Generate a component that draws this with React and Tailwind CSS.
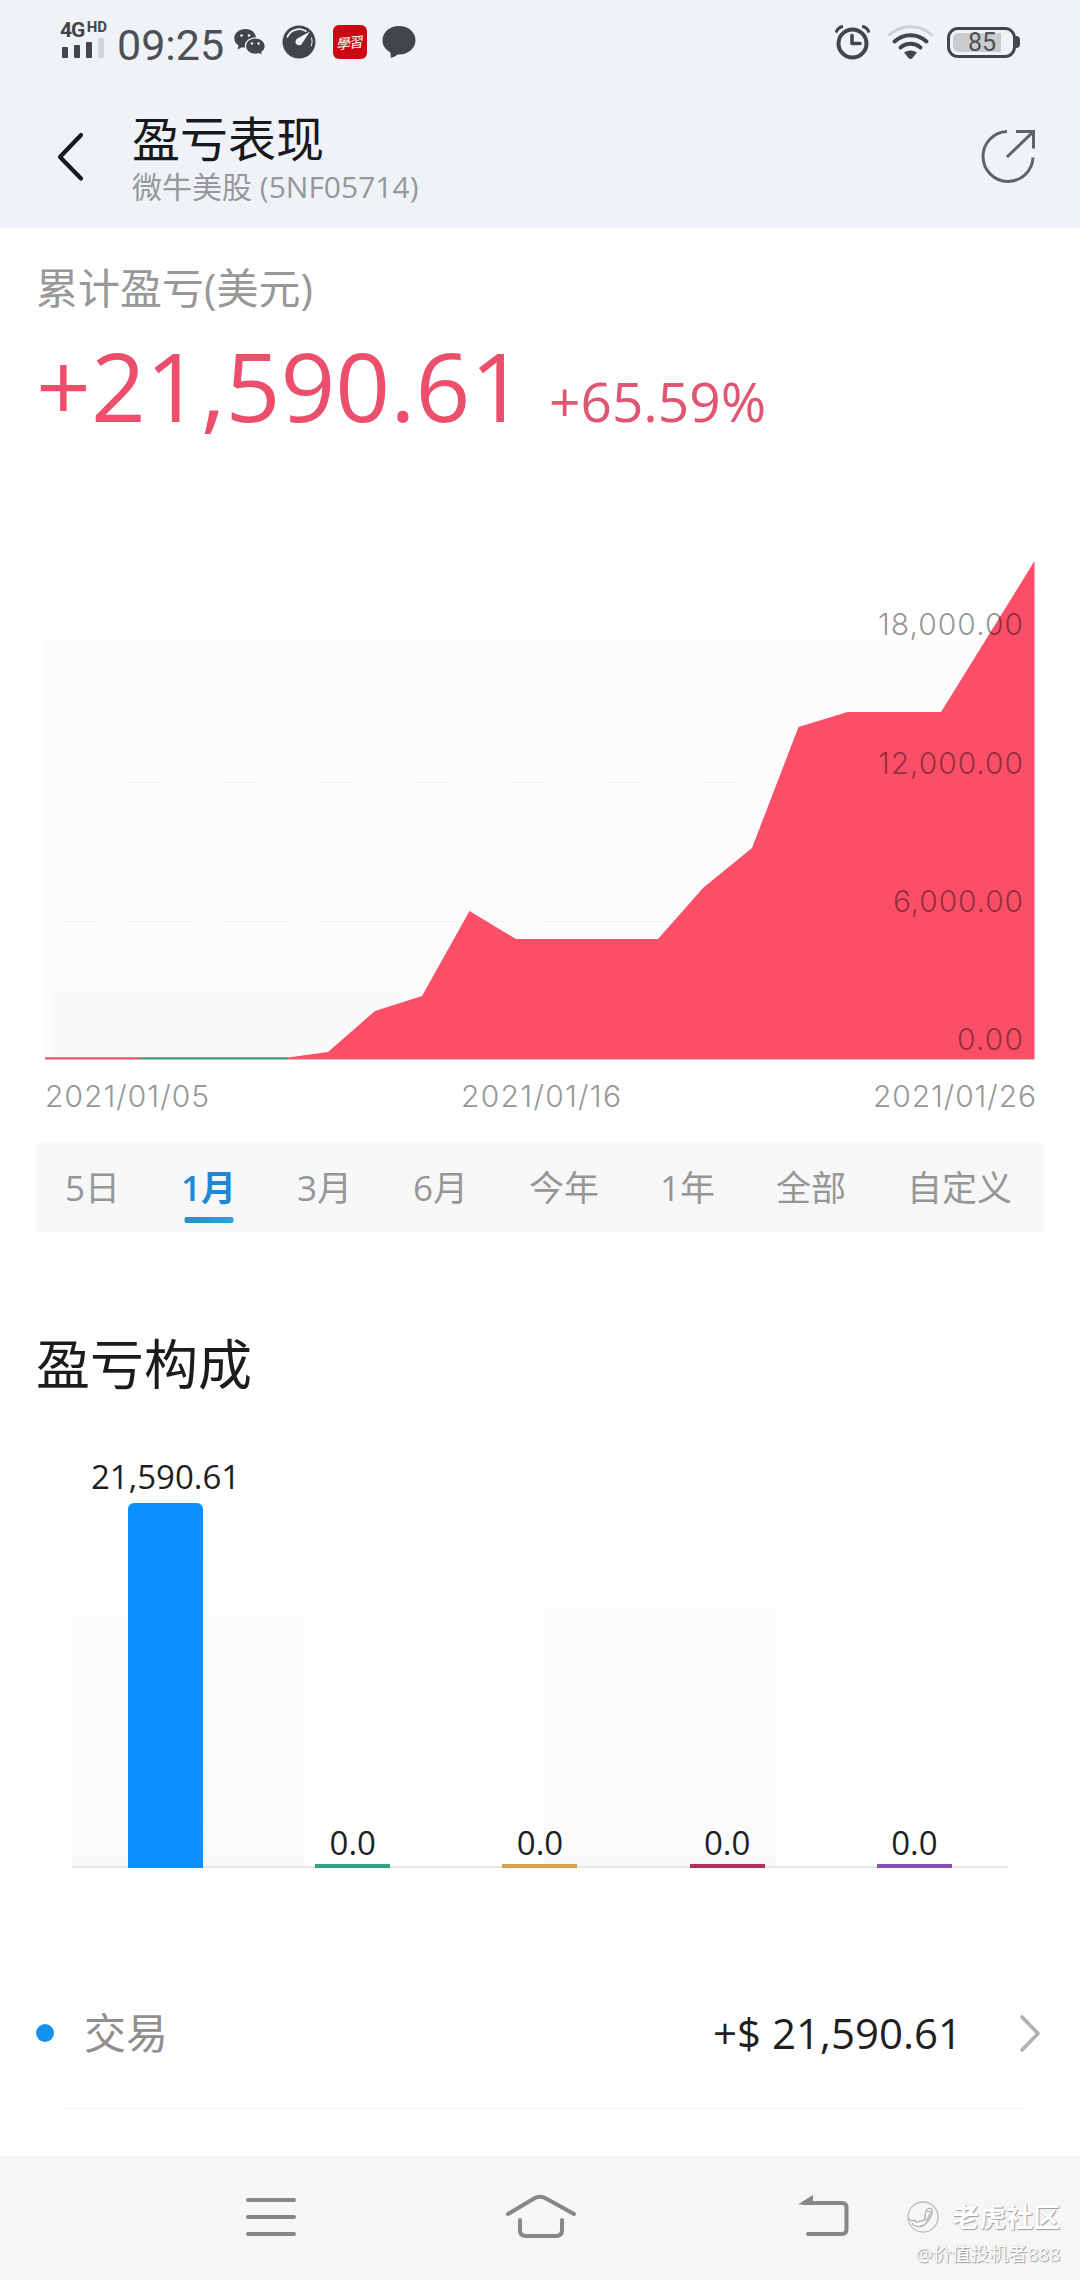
import React from "react";

const INK = "#42454a";

function Signal() {
  return (
    <div className="flex w-[47px] flex-col">
      <div className="flex h-4 items-start justify-between font-['Roboto'] font-bold text-[#42454a]">
        <span className="text-[21px] leading-4 tracking-[-1px]">4G</span>
        <span className="text-[15px] leading-[10px]">HD</span>
      </div>
      <div className="flex h-5 items-end gap-[6px] pl-[2px]">
        <i className="h-[11px] w-[6px] rounded-[1px] bg-[#42454a]" />
        <i className="h-[13px] w-[6px] rounded-[1px] bg-[#42454a]" />
        <i className="h-4 w-[6px] rounded-[1px] bg-[#42454a]" />
        <i className="h-5 w-[6px] rounded-[1px] bg-[#d3d5d8]" />
      </div>
    </div>
  );
}

function Chats() {
  return (
    <svg className="ml-2 h-[27px] w-8" viewBox="0 0 32 27">
      <path
        fill={INK}
        d="M11.5 0C5 0 .3 4 .3 9.300c0 3 1.600 5.600 4.200 7.300l-.9 4 4.200-2.400c1.200.3 2.200.4 3.700.4C17.500 18.600 22 14.700 22 9.300S17.500 0 11.500 0Z"
      />
      <path
        fill={INK}
        stroke="#eff3f8"
        strokeWidth="1.300"
        d="M21.300 8.800c-5.600 0-9.900 3.700-9.900 8.300s4.300 8.200 9.900 8.200c1.300 0 2.500-.2 3.600-.5l3.700 2-.8-3.400c2.100-1.500 3.500-3.700 3.500-6.300 0-4.600-4.400-8.300-10-8.300Z"
      />
      <g fill="#eff3f8">
        <circle cx="7.500" cy="6.500" r="1.300" />
        <circle cx="15" cy="6.500" r="1.300" />
        <circle cx="18" cy="14.500" r="1.200" />
        <circle cx="24.600" cy="14.500" r="1.200" />
      </g>
    </svg>
  );
}

function Gauge() {
  return (
    <svg className="ml-4 size-[34px]" viewBox="0 0 34 34">
      <circle cx="17" cy="17" r="16.500" fill={INK} />
      <path d="M5 12.500A13 13 0 0 1 24.500 6.500" fill="none" stroke="#eff3f8" strokeWidth="1.800" />
      <path d="M29.500 12.500a13 13 0 0 1-.2 8.500" fill="none" stroke="#eff3f8" strokeWidth="1" />
      <path d="M28 6.500 20.500 17.800a3.600 3.600 0 1 1-5.200-4.200Z" fill="#eff3f8" />
    </svg>
  );
}

function StatusBar() {
  return (
    <div className="flex h-[84px] items-center pl-[60px] pr-[60px] font-normal">
      <div className="-mt-[5px]">
        <Signal />
      </div>
      <span className="ml-[10px] mt-[5px] w-[109px] whitespace-nowrap font-['Roboto'] text-[43px] leading-[42px] text-[#4d5054]">
        09:25
      </span>
      <Chats />
      <Gauge />
      <div className="ml-[17px] flex size-[34px] items-center justify-center rounded-[6px] bg-[#cb0711]">
        <span className="-rotate-6 -skew-x-12 font-['Noto_Sans_CJK_SC'] text-[14px] leading-[34px] tracking-[-1px] text-white">
          學習
        </span>
      </div>
      <svg className="ml-[15px] h-8 w-[34px]" viewBox="0 0 34 32">
        <path
          fill={INK}
          d="M17 0C7.700 0 .5 6.200.5 14.300c0 5.200 3 9.500 7.800 12L9 32c2.500-.8 5-2 6.500-3.500h1.500c9.300 0 16.500-6 16.500-14.200S26.300 0 17 0Z"
        />
      </svg>

      <div className="ml-auto flex items-center">
        <svg className="h-[35px] w-[35px]" viewBox="0 0 35 35" fill="none" stroke={INK}>
          <circle cx="17.500" cy="18.500" r="14" strokeWidth="4" />
          <path d="M17 10.500v8h8" strokeWidth="3.600" strokeLinejoin="round" strokeLinecap="round" />
          <path d="M1 7.500C2.200 4 4.800 1.800 8 1.500M34 7.500C32.800 4 30.200 1.800 27 1.500" strokeWidth="3" />
        </svg>
        <svg className="ml-[17px] h-[35px] w-[47px]" viewBox="0 0 47 35" fill="none" strokeLinecap="round">
          <path d="M2.500 10C14-1 33-1 44.500 10" stroke="#cdd0d4" strokeWidth="3" />
          <path d="M7.500 16.500C16.500 8 30.500 8 39.500 16.500" stroke={INK} strokeWidth="4" />
          <path d="M13.500 22.500C19.500 17.500 27.500 17.500 33.500 22.500" stroke={INK} strokeWidth="4" />
          <path d="M17 27.500q6.500-4 13 0l-4.500 5.500q-2 1.800-4 0Z" fill={INK} />
        </svg>
        <div className="ml-[13px] flex h-[31px] w-[69px] items-center rounded-[11px] border-[3px] border-[#42454a] p-[3px]">
          <div className="flex h-full w-[48px] items-center justify-end rounded-l-[6px] bg-[#c9cbcd] pr-[5px]">
            <span className="mt-[2px] font-['Roboto'] text-[25px] leading-5 text-[#4d5054]">85</span>
          </div>
        </div>
        <i className="h-3 w-[4px] rounded-r-full bg-[#42454a]" />
      </div>
    </div>
  );
}

function Header() {
  return (
    <div className="flex h-[144px] items-start pl-[56px] pr-[44px]">
      <svg className="mt-[47px] h-[52px] w-[30px]" viewBox="0 0 30 52">
        <path d="M25 4 4 26l21 21.500" fill="none" stroke="#17191c" strokeWidth="4.200" strokeLinecap="round" strokeLinejoin="round" />
      </svg>
      <div className="ml-[46px] mt-[29px] flex flex-col">
        <h1 className="text-[48px] leading-[52px] text-[#17191c]">盈亏表现</h1>
        <p className="mt-[2px] text-[30px] leading-10 text-[#96989b]">微牛美股 (5NF05714)</p>
      </div>
      <svg className="ml-auto mt-[44px] h-[56px] w-[56px]" viewBox="980 128 56 56" fill="none" stroke="#606367" strokeWidth="3">
        <path d="M1007 131.500a25 25 0 1 0 26 26" />
        <path d="M1007 157l26-25M1016 131.500h17.500v17" />
      </svg>
    </div>
  );
}

const AREA =
  "M45 1057.500H288L328 1052 375 1011 422 996 469.500 911 516 939H658L703.500 887.500 752 848 798.500 727 847.500 712H941L1034.500 561V1059H45Z";

const DASHES = [
  [128, 160, 782], [224, 256, 782], [320, 352, 782], [416, 448, 782], [512, 544, 782], [608, 640, 782], [704, 736, 782],
  [64, 96, 921], [128, 192, 921], [224, 288, 921], [320, 458, 921], [482, 508, 921], [540, 668, 921],
];

const Y_LABELS = [
  ["18,000.00", 878, 145, 635],
  ["12,000.00", 878, 145, 774],
  ["6,000.00", 893, 130, 912],
  ["0.00", 957, 66, 1050],
];

const DATES = [
  ["2021/01/05", 45, 164],
  ["2021/01/16", 461, 160],
  ["2021/01/26", 873, 163],
];

function AreaChart() {
  return (
    <svg className="mt-[94px] block h-[580px] w-[1080px]" viewBox="0 540 1080 580">
      <path d="M45 640H985L941 712V1058H45Z" fill="#fcfcfc" />
      <rect x="51" y="991" width="350" height="67" fill="#fafafa" />
      {DASHES.map(([a, b, y]) => (
        <path key={a + "-" + y} d={`M${a} ${y + 0.5}H${b}`} stroke="#f1f1f1" strokeWidth="1" />
      ))}
      <path d={AREA} fill="#fb4f67" />
      <path d="M45 1058.500H140" stroke="#e5536c" strokeWidth="2" />
      <path d="M140 1058.500H288" stroke="#2f9f80" strokeWidth="2" />
      <path d="M288 1059H1034.500" stroke="#d9667c" strokeWidth="1" />
      <g fontFamily="Inter, sans-serif" fontSize="30" fontWeight="300">
        {Y_LABELS.map(([t, x, w, y]) => (
          <text key={t} x={x} y={y} textLength={w} fill="#000" fillOpacity="0.430">
            {t}
          </text>
        ))}
        {DATES.map(([t, x, w]) => (
          <text key={t} x={x} y="1107" textLength={w} fill="#969899">
            {t}
          </text>
        ))}
      </g>
    </svg>
  );
}

const TABS = ["5日", "1月", "3月", "6月", "今年", "1年", "全部", "自定义"];

function RangeTabs() {
  return (
    <div className="mx-[36px] mt-[23px] flex h-[89px] items-center gap-[61px] bg-[#f7f7f7] pl-[29px] text-[35px] leading-[40px] text-[#969696]">
      {TABS.map((t) =>
        t === "1月" ? (
          <div key={t} className="relative font-semibold text-[#2287d3]">
            {t}
            <i className="absolute -bottom-[15px] left-1/2 h-[6px] w-[49px] -translate-x-1/2 rounded-[2px] bg-linear-to-r from-[#2b8bc0] to-[#2ca6dc]" />
          </div>
        ) : (
          <div key={t}>{t}</div>
        )
      )}
    </div>
  );
}

const BARS = [
  { label: "21,590.61", h: 365, cls: "rounded-t-[6px] bg-[#0d8fff]", gap: "mb-[6px]" },
  { label: "0.0", h: 4, cls: "bg-[#2ea583]", gap: "mb-[1px]" },
  { label: "0.0", h: 4, cls: "bg-[#dc9f4b]", gap: "mb-[1px]" },
  { label: "0.0", h: 4, cls: "bg-[#b2305f]", gap: "mb-[1px]" },
  { label: "0.0", h: 4, cls: "bg-[#8650ae]", gap: "mb-[1px]" },
];

function BarChart() {
  return (
    <div className="relative mx-[72px] mt-[62px] h-[412px] border-b-2 border-[#e6e6e8]">
      <div className="absolute bottom-0 left-0 h-[308px] w-[233px] bg-linear-to-b from-[#fdfdfd] to-[#fafafa]" />
      <div className="absolute bottom-0 left-[471px] h-[314px] w-[234px] bg-linear-to-b from-[#fdfdfd] to-[#fafafa]" />
      <div className="relative grid h-[412px] grid-cols-5">
        {BARS.map((b, i) => (
          <div key={i} className="flex flex-col items-center justify-end">
            <span className={"text-[33px] leading-10 text-[#1f1f1f] " + b.gap}>{b.label}</span>
            <div className={"w-[75px] " + b.cls} style={{ height: b.h }} />
          </div>
        ))}
      </div>
    </div>
  );
}

function NavBar() {
  return (
    <div className="relative mt-[47px] h-[124px] bg-[#f6f6f6]">
      <svg className="block h-[124px] w-[1080px]" viewBox="0 2156 1080 124" fill="none" stroke="#878787" strokeWidth="4" strokeLinecap="round" strokeLinejoin="round">
        <path d="M248 2200h46M248 2217h46M248 2234h46" />
        <path d="M508 2214 534 2198.500q6-3.500 12 0L574 2214" />
        <path d="M520 2220v10q0 6 6 6h30q6 0 6-6v-10" />
        <path d="M808 2234h34q4.500 0 4.500-4.500v-22q0-4.500-4.500-4.500H804" strokeLinejoin="miter" />
        <path d="M798 2204.500 813 2195v9.500Z" fill="#878787" stroke="none" />
      </svg>
      <div className="absolute right-[20px] top-[44px] flex flex-col items-end text-white [text-shadow:1px_1px_1px_#9b9ca2,0_0_1px_#c2c3c7]">
        <div className="flex items-center gap-[12px]">
          <svg className="size-[34px]" viewBox="0 0 34 34" fill="none" strokeLinecap="round" strokeLinejoin="round">
            <circle cx="17" cy="17" r="15" stroke="#b9babe" strokeWidth="1.300" />
            <path
              d="M3 19.500c1.500-.5 2 2 3.500 1.500s1.500-1.500 2.500 0 2.500 1.500 4 .5 4 .5 5.500-1.500 0-6 1.500-9 4-3.500 5.500-1.500-.5 7-2.500 10-6 7-9.500 7-6-1-7-3"
              stroke="#b3b4b9"
              strokeWidth="1.500"
              fill="#fff"
            />
            <path d="M21.500 12c1.500-1.500 3-.5 2.500 1s-1.500 5-3.500 7" stroke="#b3b4b9" strokeWidth="1.200" />
          </svg>
          <span className="text-[27px] font-bold leading-[34px]">老虎社区</span>
        </div>
        <span className="mt-[6px] text-[19px] leading-[28px]">@价值投机者888</span>
      </div>
    </div>
  );
}

export default function App() {
  return (
    <div className="flex h-[2280px] w-[1080px] flex-col overflow-hidden bg-[#fefefe] font-['Open_Sans','Noto_Sans_CJK_SC',sans-serif] font-[370]">
      <div className="bg-[#eff3f8]">
        <StatusBar />
        <Header />
      </div>

      <div className="px-[36px] pt-[36px]">
        <p className="text-[42px] leading-[48px] text-[#989898]">累计盈亏(美元)</p>
        <div className="mt-[13px] flex h-[121px] items-baseline">
          <span className="w-[491px] text-[96px] leading-[120px] text-[#ec4f6c]">+21,590.61</span>
          <span className="ml-[22px] text-[55px] leading-none text-[#df5673]">+65.59%</span>
        </div>
      </div>

      <AreaChart />
      <RangeTabs />

      <h2 className="ml-[36px] mt-[102px] text-[54px] leading-[60px] text-[#1c1c1c]">盈亏构成</h2>
      <BarChart />

      <div className="mt-[90px] flex h-[150px] items-center pl-[36px] pr-[38px]">
        <i className="size-[18px] rounded-full bg-[#1490ee]" />
        <span className="ml-[30px] text-[42px] leading-[50px] text-[#8f8f8f]">交易</span>
        <span className="ml-auto text-[42px] leading-[50px] text-[#1f1f1f]">+$ 21,590.61</span>
        <svg className="ml-[56px] h-[40px] w-[24px]" viewBox="0 0 24 40">
          <path d="M4 4 20 20.500 4 37" fill="none" stroke="#b0b0b0" strokeWidth="3.600" strokeLinecap="round" strokeLinejoin="round" />
        </svg>
      </div>
      <div className="ml-[64px] mr-[56px] h-px shrink-0 bg-[#f3f3f3]" />

      <NavBar />
    </div>
  );
}
